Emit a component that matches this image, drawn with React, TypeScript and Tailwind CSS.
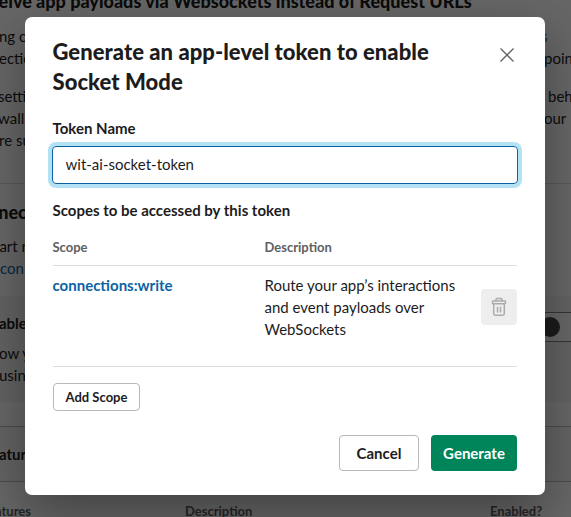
import React from "react";

type LineProps = { left: string; right?: string; className?: string; leftClass?: string; rightClass?: string };

function Line({ left, right = "", className = "", leftClass = "", rightClass = "" }: LineProps) {
  return (
    <div className={`flex h-[22px] justify-between overflow-hidden whitespace-nowrap ${className}`}>
      <span className={`w-[80px] ${leftClass}`}>{left}</span>
      <span className={`w-[27px] ${rightClass}`}>{right}</span>
    </div>
  );
}

function Background() {
  return (
    <div className="h-[517px] w-[571px] overflow-hidden bg-white text-[15px] leading-[22px]">
      <h2 className="-mt-[10px] -ml-[10px] h-[35px] whitespace-nowrap text-[18px] font-black leading-[22px]">
        ceive app payloads via Websockets instead of Request URLs
      </h2>
      <Line left="ng or" right="s" leftClass="-ml-[1px]" rightClass="mr-[3px] text-[#1264a3]" />
      <Line left="ections" right="poin" leftClass="-ml-[1px]" />
      <Line className="mt-4" left="setting" right="beh" leftClass="-ml-[2px]" rightClass="-mr-[4px]" />
      <Line left="wall," right="our" leftClass="-ml-[2px]" />
      <Line left="re sure" leftClass="-ml-[1px]" />
      <div className="mt-[32px] h-px bg-[#dddddd]" />
      <h3 className="-ml-[12px] mt-[17px] h-[22px] text-[18px] font-black">nnect</h3>
      <Line className="mt-[12px]" left="tart re" leftClass="-ml-[6px]" />
      <Line left="conn" leftClass="text-[#1264a3]" />
      <div className="mt-[17px] h-[106px] bg-[#f4f4f4] pt-[16px]">
        <div className="flex h-[30px] justify-between">
          <b className="-ml-px">able S</b>
          <div className="mr-[-20px] flex h-[30px] w-[60px] items-center border border-[#868686] bg-white pl-[8px]">
            <i className="size-[20px] rounded-full bg-[#454545]" />
          </div>
        </div>
        <Line left="ow yo" leftClass="-ml-px" />
        <Line left="using" leftClass="-ml-px" />
      </div>
      <div className="mt-[24px] h-px bg-[#bbbbbb]" />
      <div className="h-[54px] bg-[#f8f8f8] pt-[16px] font-bold"><span className="-ml-[9px]">eatures</span></div>
      <div className="h-px bg-[#bbbbbb]" />
      <div className="mt-[18px] grid grid-cols-[185px_305px_1fr] text-[13px] font-bold text-[#616061]">
        <span className="-ml-[5px]">atures</span><span>Description</span><span>Enabled?</span>
      </div>
    </div>
  );
}

function TrashIcon() {
  return (
    <svg width="16" height="20" viewBox="0 0 16 20" fill="none" stroke="#ababab" strokeWidth="1.5" strokeLinejoin="round">
      <path d="M5 4V2.5Q5 1.6 6 1.6H10Q11 1.6 11 2.5V4" />
      <rect x="1.5" y="4" width="13" height="2.8" rx=".7" />
      <path d="M2.7 7V16.8Q2.7 18.2 4.1 18.2H11.9Q13.3 18.2 13.3 16.8V7M6.5 9.8V15.6M9.5 9.8V15.6" />
    </svg>
  );
}

function TokenDialog() {
  return (
    <section role="dialog" className="flex h-[478px] w-[520px] flex-col rounded-[7px] bg-white px-[28px] pt-[20px] text-[15px] leading-[22px] shadow-[0_18px_48px_rgba(0,0,0,0.35)]">
      <header className="flex justify-between">
        <h1 className="-ml-[0.5px] w-[410px] text-[22px] leading-[30px] font-black tracking-[0.05px]">Generate an app-level token to enable Socket Mode</h1>
        <button aria-label="Close" className="mt-[11px] mr-[3px] size-[14px]">
          <svg width="14" height="14" viewBox="0 0 14 14" stroke="#616061" strokeWidth="1.3"><path d="M.5 .5L13.5 13.5M13.5 .5L.5 13.5" /></svg>
        </button>
      </header>
      <label className="-ml-[0.5px] mt-[20px] font-bold">Token Name</label>
      <input readOnly value="wit-ai-socket-token" className="-mx-px mt-[7px] h-[38px] rounded-[4px] border border-[#0b63a5] px-[12.5px] pb-[2px] shadow-[0_0_0_4px_rgba(0,160,215,0.3)] outline-none" />
      <p className="-ml-[0.5px] mt-[15px] font-bold">Scopes to be accessed by this token</p>
      <div className="mt-[16px] grid h-[29px] grid-cols-[212px_1fr] border-b border-[#dddddd] text-[13px] font-bold text-[#616061]">
        <span className="-mt-px -ml-[0.5px]">Scope</span><span className="-mt-px -ml-[0.5px]">Description</span>
      </div>
      <div className="flex h-[101px] border-b border-[#dddddd] pt-[8px]">
        <a className="-ml-[0.5px] w-[212px] font-bold text-[#0b63a5]">connections:write</a>
        <p className="w-[200px]">Route your app’s interactions and event payloads over WebSockets</p>
        <button aria-label="Delete scope" className="mt-[15px] ml-auto flex size-[36px] items-center justify-center rounded-[4px] bg-[#eeeeee]"><TrashIcon /></button>
      </div>
      <button className="mt-[16px] h-[28px] w-[87px] shrink-0 rounded-[4px] border border-[#b8b8b8] text-[13px] font-bold">Add Scope</button>
      <footer className="mt-[24px] flex justify-end gap-3 font-bold">
        <button className="h-[36px] w-[80px] rounded-[4px] border border-[#b8b8b8]">Cancel</button>
        <button className="h-[36px] w-[86px] rounded-[4px] bg-[#00855a] text-white">Generate</button>
      </footer>
    </section>
  );
}

export default function App() {
  return (
    <main className="relative h-[517px] w-[571px] overflow-hidden font-['Lato',sans-serif] text-[#1d1c1d]">
      <Background />
      <div className="absolute inset-0 flex items-start bg-black/60 pt-[17px] pl-[25px]"><TokenDialog /></div>
    </main>
  );
}
